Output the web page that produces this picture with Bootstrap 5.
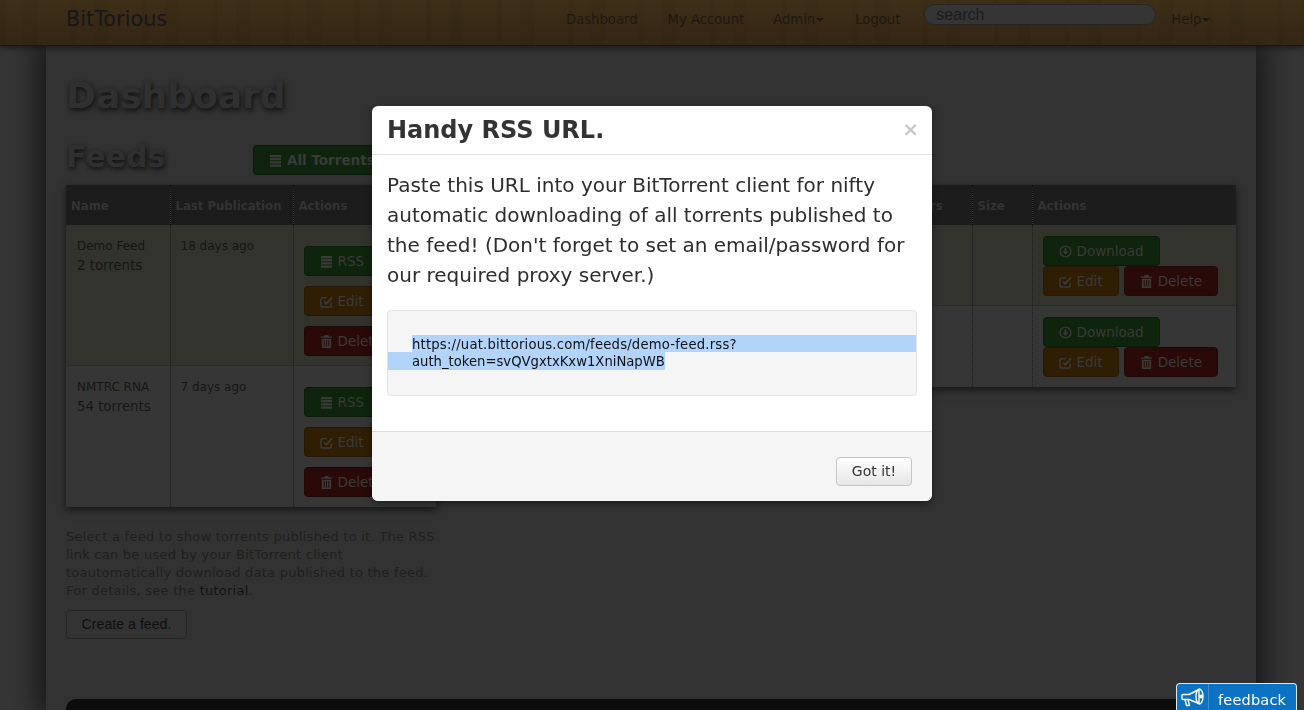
<!DOCTYPE html>
<html lang="en">
<head>
  <meta charset="UTF-8">
  <meta name="viewport" content="width=device-width, initial-scale=1.0">
  <title>BitTorious</title>
  <link href="https://cdn.jsdelivr.net/npm/bootstrap@5.3.3/dist/css/bootstrap.min.css" rel="stylesheet">
  <style>
    html, body { height: 100%; overflow: hidden; }
    body { background: #363636; font-family: "DejaVu Sans", Verdana, sans-serif; font-size: 13px; color: #161616; }

    /* top bar, wood look */
    .wood-bar {
      height: 46px; padding: 0 0 0 66px; position: relative; z-index: 2;
      background-color: #3a2b15;
      background-image:
        repeating-linear-gradient(90deg, rgba(0,0,0,.015) 0 5px, rgba(255,255,255,.006) 5px 23px, rgba(0,0,0,.01) 23px 37px, rgba(255,255,255,.008) 37px 71px),
        linear-gradient(180deg, #3c2d16, #322512);
      border-bottom: 1px solid #1d1710;
      box-shadow: 0 2px 6px rgba(0,0,0,.5);
    }
    .wood-brand { font-size: 20.8px; color: #17171a; line-height: 38px; width: 500px; }
    .wood-link { font-size: 13.2px; color: #1c1914; line-height: 39px; white-space: nowrap; }
    .caret-down { display: inline-block; border: 4px solid transparent; border-top-color: #1c1914; border-bottom: 0; vertical-align: 2px; margin-left: 1px; }
    .search-pill {
      width: 232px; height: 21px; border-radius: 11px; background: #353535; border: 1px solid #262626;
      color: #1c1c1c; font: 16px/19px "Liberation Sans", sans-serif; padding-left: 11px; margin: 4px 15px 0 24px;
    }
    .link-a { margin-left: 30px; }
    .link-b { margin-left: 29px; }
    .link-c { margin-left: 31px; }

    /* page sheet */
    .sheet {
      margin: 0 48px 0 46px; padding: 20px 20px 0; height: 664px; position: relative; overflow: hidden;
      background: #323232;
    }
    .sheet-shadow { box-shadow: 0 0 30px 6px #121212; }
    .page-title { font-size: 36px; font-weight: 700; line-height: 60px; margin: 0; color: #303030; text-shadow: 1px 2px 5px #0e0e0e; height: 60px; }
    .sect-title { font-size: 30px; font-weight: 700; line-height: 40px; margin: 0; padding-bottom: 6px; width: 187px; color: #303030; text-shadow: 1px 2px 5px #0e0e0e; }
    .feeds-line { margin: 14px 0 5px; height: 40px; }

    .btn-dim { display: inline-flex; align-items: center; height: 30px; border-radius: 4px; font-size: 13.5px; color: #3a3a3a; padding: 0 15px; white-space: nowrap; border: 1px solid #181818; }
    .btn-dim svg { width: 13px; height: 13px; margin-right: 5px; flex: none; }
    .dim-green { background: #0e240c; border-color: #0b1a0b; }
    .dim-orange { background: #2f1e04; border-color: #261904; }
    .dim-red { background: #290a09; border-color: #1f0908; }
    .btn-strong { font-weight: 700; }

    .feed-table { table-layout: fixed; border-collapse: collapse; box-shadow: 0 3px 8px rgba(0,0,0,.55); }
    .feed-table th { height: 40px; background: #1c1c1c; color: #333; font-size: 11.7px; font-weight: 700; padding: 3px 5px 0; vertical-align: middle; border-left: 1px dotted #0c0c0c; white-space: nowrap; overflow: hidden; }
    .feed-table td { vertical-align: top; padding: 11px 10px 9px; font-size: 12px; line-height: 20px; border-left: 1px dotted #1c1c1c; background: #363636; }
    .feed-table th:first-child, .feed-table td:first-child { border-left: 0; }
    .feed-table td:first-child { padding-left: 11px; }
    .feed-table tr.row-picked td { background: #31332c; border-bottom: 1px solid #2c2c2c; }
    .count-line { font-size: 13.3px; }
    .left-table { width: 370px; }
    .left-table th:nth-child(1) { width: 104px; }
    .left-table th:nth-child(2) { width: 123px; }
    .right-table { width: 780px; }
    .right-table th:nth-child(1) { width: 240px; }
    .right-table th:nth-child(2) { width: 204px; }
    .right-table th:nth-child(3) { width: 72px; }
    .right-table th:nth-child(4) { width: 60px; }
    .feed-table td.act-cell { padding: 11px 10px 9px; line-height: 0; }
    .feed-table td.act-stack { padding: 21px 0 9px 10px; overflow: hidden; }
    .feed-table tr:last-child td.act-cell, .feed-table tr:last-child td.act-stack { padding-bottom: 10px; }
    .stack-gap { display: grid; gap: 10px; }
    .pair-gap { gap: 5px; }

    .help-text { font-size: 13px; line-height: 18px; color: #1f1f1f; margin: 21px 0 0; width: 370px; letter-spacing: .25px; }
    .help-text b { font-weight: 400; color: #121212; }
    .plain-dim { display: inline-block; margin-top: 10px; width: 121px; height: 29px; border: 1px solid #252525; border-radius: 4px; background: #333; color: #0f0f0f; font: 14.2px/27px "Liberation Sans", sans-serif; text-align: center; }
    .foot-black { position: absolute; left: 20px; right: 20px; top: 653px; height: 40px; background: #0c0c0c; border-radius: 10px 10px 0 0; }

    /* dialog */
    .rss-dialog { position: fixed; left: 372px; top: 106px; width: 560px; z-index: 10; margin: 0; }
    .rss-dialog .modal-content { background: #fff; border: 0; border-radius: 6px; box-shadow: 0 3px 7px rgba(0,0,0,.4); color: #333; overflow: hidden; }
    .rss-dialog .modal-header { height: 49px; padding: 0 15px; border-bottom: 1px solid #e5e5e5; }
    .rss-dialog h3 { font-size: 24px; font-weight: 700; line-height: 48px; margin: 0; color: #333; }
    .x-close { font-size: 20px; font-weight: 700; color: #c9c9c9; line-height: 20px; margin: -2px -2px 0 0; }
    .rss-dialog .modal-body { padding: 15px 15px 35px; }
    .rss-dialog p { font-size: 20px; line-height: 30px; margin: 0 0 20px; color: #2d2d2d; }
    .url-well { height: 86px; padding-top: 24px; background: #f5f5f5; border: 1px solid #e3e3e3; border-radius: 4px; font-size: 13.2px; line-height: 18px; color: #111; }
    .url-line1 { margin-left: 24px; background: #b2d3fa; height: 17px; line-height: 19px; letter-spacing: .2px; }
    .url-line2 { display: block; width: fit-content; background: #b2d3fa; padding-left: 24px; height: 18px; line-height: 20px; }
    .rss-dialog .modal-footer { height: 70px; padding: 25px 20px 0 0; background: #f5f5f5; border-top: 1px solid #ddd; border-radius: 0 0 6px 6px; display: flex; align-items: flex-start; justify-content: flex-end; }
    .got-btn { margin: 0; width: 76px; height: 29px; padding: 0; font-size: 14px; line-height: 27px; color: #333; background: linear-gradient(#fff, #e6e6e6); border: 1px solid #c5c5c5; border-radius: 4px; }

    /* feedback tab */
    .feedback-tab { position: fixed; left: 1176px; top: 683px; width: 121px; height: 27px; z-index: 20; background: #0b72c4; border: 1px solid #d8e8f5; border-bottom: 0; border-radius: 4px 4px 0 0; color: #fff; font-size: 14.5px; overflow: hidden; }
    .feedback-icon { width: 32px; height: 100%; border-right: 1px solid #3f8fd0; }
    .feedback-word { line-height: 32px; padding-left: 9px; letter-spacing: .2px; }
  </style>
</head>
<body>

<svg width="0" height="0" class="position-absolute">
  <symbol id="ic-bars" viewBox="0 0 14 14"><path fill="currentColor" d="M1 1h12v2.4H1zM1 4.4h12v2.4H1zM1 7.8h12v2.4H1zM1 11.2h12v2.4H1z"/></symbol>
  <symbol id="ic-edit" viewBox="0 0 14 14"><path fill="none" stroke="currentColor" stroke-width="1.6" d="M12 8v3a2 2 0 0 1-2 2H3a2 2 0 0 1-2-2V5a2 2 0 0 1 2-2h4"/><path fill="none" stroke="currentColor" stroke-width="2" d="M4.5 7l2.2 2.2L13 2.5"/></symbol>
  <symbol id="ic-trash" viewBox="0 0 14 14"><path fill="currentColor" fill-rule="evenodd" d="M5 0h4l.6 1.6H13v1.4H1V1.6h3.4zM2 4h10v10H2zM4 5.5v7h1v-7zM6.5 5.5v7h1v-7zM9 5.5v7h1v-7z"/></symbol>
  <symbol id="ic-down" viewBox="0 0 14 14"><circle cx="7" cy="7" r="5.8" fill="none" stroke="currentColor" stroke-width="1.5"/><path fill="currentColor" d="M6 3.5h2v3.5h2L7 10.5 4 7h2z"/></symbol>
</svg>

<nav class="wood-bar d-flex align-items-start">
  <div class="wood-brand">BitTorious</div>
  <div class="d-flex align-items-start">
    <span class="wood-link">Dashboard</span>
    <span class="wood-link link-a">My Account</span>
    <span class="wood-link link-b">Admin<i class="caret-down"></i></span>
    <span class="wood-link link-c">Logout</span>
    <div class="search-pill">search</div>
    <span class="wood-link">Help<i class="caret-down"></i></span>
  </div>
</nav>

<main class="sheet sheet-shadow">
  <h1 class="page-title">Dashboard</h1>
  <div class="feeds-line d-flex align-items-center">
    <h2 class="sect-title">Feeds</h2>
    <span class="btn-dim dim-green btn-strong"><svg><use href="#ic-bars"/></svg>All Torrents</span>
  </div>
  <div class="d-flex align-items-start justify-content-between">
    <div>
      <table class="feed-table left-table">
        <thead><tr><th>Name</th><th>Last Publication</th><th>Actions</th></tr></thead>
        <tbody>
          <tr class="row-picked">
            <td>Demo Feed<br><span class="count-line">2 torrents</span></td><td>18 days ago</td>
            <td class="act-stack">
              <div class="stack-gap">
                <span class="btn-dim dim-green"><svg><use href="#ic-bars"/></svg>RSS</span>
                <span class="btn-dim dim-orange"><svg><use href="#ic-edit"/></svg>Edit</span>
                <span class="btn-dim dim-red"><svg><use href="#ic-trash"/></svg>Delete</span>
              </div>
            </td>
          </tr>
          <tr>
            <td>NMTRC RNA<br><span class="count-line">54 torrents</span></td><td>7 days ago</td>
            <td class="act-stack">
              <div class="stack-gap">
                <span class="btn-dim dim-green"><svg><use href="#ic-bars"/></svg>RSS</span>
                <span class="btn-dim dim-orange"><svg><use href="#ic-edit"/></svg>Edit</span>
                <span class="btn-dim dim-red"><svg><use href="#ic-trash"/></svg>Delete</span>
              </div>
            </td>
          </tr>
        </tbody>
      </table>
      <p class="help-text">Select a feed to show torrents published to it. The RSS link can be used by your BitTorrent client<br>toautomatically download data published to the feed. For details, see the <b>tutorial</b>.</p>
      <span class="plain-dim">Create a feed.</span>
    </div>
    <table class="feed-table right-table">
      <thead><tr><th>Name</th><th>Published</th><th>Peers</th><th>Size</th><th>Actions</th></tr></thead>
      <tbody>
        <tr class="row-picked">
          <td></td><td></td><td></td><td></td>
          <td class="act-cell">
            <div class="d-flex"><span class="btn-dim dim-green"><svg><use href="#ic-down"/></svg>Download</span></div>
            <div class="d-flex pair-gap">
              <span class="btn-dim dim-orange"><svg><use href="#ic-edit"/></svg>Edit</span>
              <span class="btn-dim dim-red"><svg><use href="#ic-trash"/></svg>Delete</span>
            </div>
          </td>
        </tr>
        <tr>
          <td></td><td></td><td></td><td></td>
          <td class="act-cell">
            <div class="d-flex"><span class="btn-dim dim-green"><svg><use href="#ic-down"/></svg>Download</span></div>
            <div class="d-flex pair-gap">
              <span class="btn-dim dim-orange"><svg><use href="#ic-edit"/></svg>Edit</span>
              <span class="btn-dim dim-red"><svg><use href="#ic-trash"/></svg>Delete</span>
            </div>
          </td>
        </tr>
      </tbody>
    </table>
  </div>
  <div class="foot-black"></div>
</main>

<div class="modal-dialog rss-dialog">
  <div class="modal-content">
    <div class="modal-header d-flex justify-content-between align-items-center">
      <h3>Handy RSS URL.</h3>
      <span class="x-close">×</span>
    </div>
    <div class="modal-body">
      <p>Paste this URL into your BitTorrent client for nifty automatic downloading of all torrents published to the feed! (Don't forget to set an email/password for our required proxy server.)</p>
      <div class="url-well">
        <div class="url-line1">https://uat.bittorious.com/feeds/demo-feed.rss?</div>
        <span class="url-line2">auth_token=svQVgxtxKxw1XniNapWB</span>
      </div>
    </div>
    <div class="modal-footer">
      <button type="button" class="btn got-btn">Got it!</button>
    </div>
  </div>
</div>

<div class="feedback-tab d-flex">
  <div class="feedback-icon d-flex align-items-center justify-content-center">
    <svg width="24" height="22" viewBox="0 0 24 22" fill="none" stroke="#fff" stroke-width="1.4" stroke-linejoin="round">
      <path d="M2 8.5h6L18 3.5v14L8 13.5H2a1 1 0 0 1-1-1v-3a1 1 0 0 1 1-1z"/>
      <path d="M4 13.5l1.5 6h3l-1.5-6"/>
      <ellipse cx="18.5" cy="10.5" rx="3.5" ry="7.5"/>
      <circle cx="20" cy="10.5" r="1.2" fill="#fff"/>
    </svg>
  </div>
  <div class="feedback-word">feedback</div>
</div>

</body>
</html>
